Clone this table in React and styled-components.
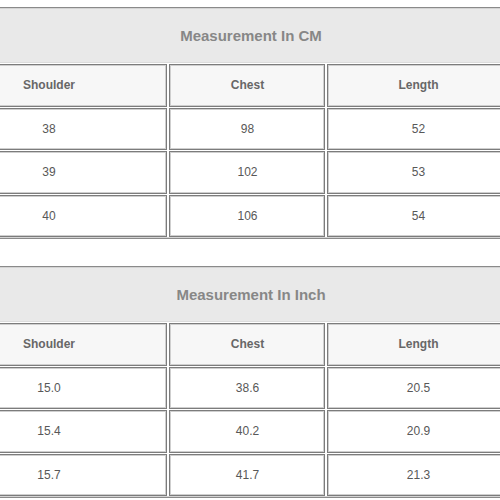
import React from 'react'
import styled, { createGlobalStyle } from 'styled-components'

const GlobalStyle = createGlobalStyle`
  body {
    margin: 0;
    background: #fff;
    overflow: hidden;
    font-family: 'Liberation Sans', Arial, sans-serif;
  }
`

const tables = [
  {
    title: 'Measurement In CM',
    rows: [
      ['38', '98', '52'],
      ['39', '102', '53'],
      ['40', '106', '54'],
    ],
  },
  {
    title: 'Measurement In Inch',
    rows: [
      ['15.0', '38.6', '20.5'],
      ['15.4', '40.2', '20.9'],
      ['15.7', '41.7', '21.3'],
    ],
  },
]

const headers = ['Shoulder', 'Chest', 'Length']

const Page = styled.div`
  width: 500px;
  height: 500px;
  overflow: hidden;
  padding-top: 7px;
  box-sizing: border-box;
  display: flex;
  flex-direction: column;
  gap: 27px;
`

const Table = styled.div`
  margin-left: -72px;
  width: 583px;
  border: 1px solid #8a8a8a;
  box-shadow: inset 0 0 0 1px #d4d4d4;
  padding: 1px;
  display: grid;
  grid-template-columns: 237px 156px 182px;
  column-gap: 2px;
  row-gap: 1px;
`

const Title = styled.div`
  grid-column: 1 / -1;
  height: 53px;
  background: #e9e9e9;
  display: flex;
  align-items: center;
  justify-content: center;
  padding-left: 63px;
  font-size: 15px;
  font-weight: bold;
  color: #878787;
  border-bottom: 1px solid #dcdcdc;
`

const Cell = styled.div`
  height: 42.5px;
  box-sizing: border-box;
  border: 1px solid #7c7c7c;
  box-shadow: inset 0 0 0 1px #cfcfcf;
  background: ${p => (p.$head ? '#f7f7f7' : '#fff')};
  display: flex;
  align-items: center;
  justify-content: center;
  padding-left: 1px;
  font-size: 12px;
  font-weight: ${p => (p.$head ? 'bold' : 'normal')};
  color: ${p => (p.$head ? '#676767' : '#585858')};
`

function SizeTable({ title, rows }) {
  return (
    <Table>
      <Title>{title}</Title>
      {headers.map(h => (
        <Cell key={h} $head>
          {h}
        </Cell>
      ))}
      {rows.map((row, i) =>
        row.map((v, j) => <Cell key={`${i}-${j}`}>{v}</Cell>)
      )}
    </Table>
  )
}

export default function App() {
  return (
    <>
      <GlobalStyle />
      <Page>
        {tables.map(t => (
          <SizeTable key={t.title} title={t.title} rows={t.rows} />
        ))}
      </Page>
    </>
  )
}
